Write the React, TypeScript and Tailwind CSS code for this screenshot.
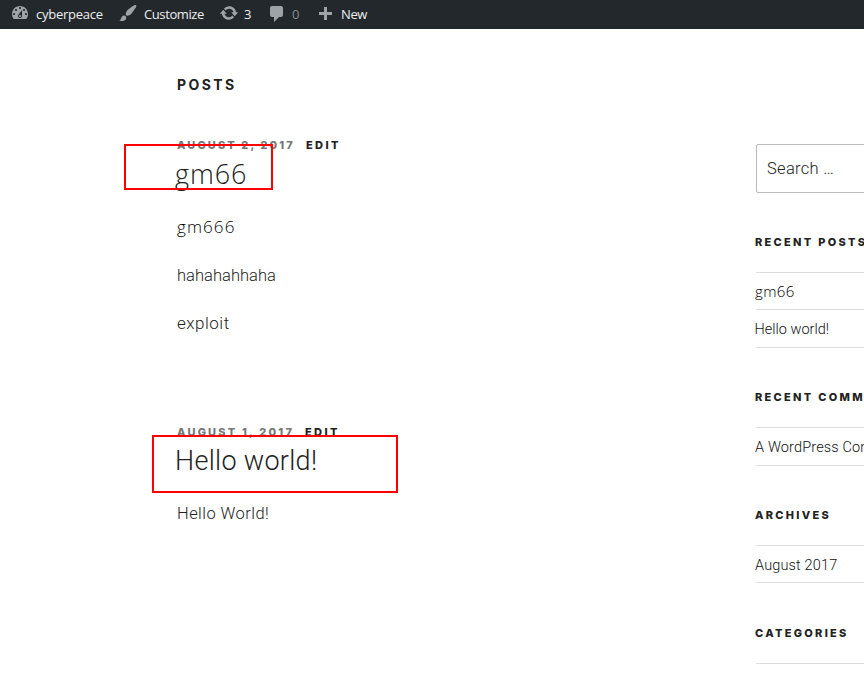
const franklin = "font-['Roboto','Open_Sans',sans-serif] font-light";
const humanist = "font-['Open_Sans','Noto_Sans',sans-serif] font-light";
const heading = "font-['Inter','Liberation_Sans',sans-serif] uppercase whitespace-nowrap";

function Icon({ d, className }: { d: string; className: string }) {
  return (
    <svg viewBox="0 0 20 20" className={`size-5 shrink-0 fill-[#9ea3a8] ${className}`} aria-hidden="true">
      <path d={d} />
    </svg>
  );
}

const icons = {
  dashboard:
    'M3.76 16h12.48c1.1-1.37 1.76-3.11 1.76-5 0-4.42-3.58-8-8-8s-8 3.58-8 8c0 1.89.66 3.63 1.76 5zM10 4c.55 0 1 .45 1 1s-.45 1-1 1-1-.45-1-1 .45-1 1-1zM6 6c.55 0 1 .45 1 1s-.45 1-1 1-1-.45-1-1 .45-1 1-1zm8 0c.55 0 1 .45 1 1s-.45 1-1 1-1-.45-1-1 .45-1 1-1zm-5.37 5.55L12 7v6c0 1.1-.9 2-2 2s-2-.9-2-2c0-.57.24-1.08.63-1.45zM4 10c.55 0 1 .45 1 1s-.45 1-1 1-1-.45-1-1 .45-1 1-1zm12 0c.55 0 1 .45 1 1s-.45 1-1 1-1-.45-1-1 .45-1 1-1zm-5 3c0-.55-.45-1-1-1s-1 .45-1 1 .45 1 1 1 1-.45 1-1z',
  brush:
    'M18.33 3.57s.27-.8-.31-1.36c-.53-.52-1.22-.24-1.22-.24-.61.3-5.76 3.47-7.67 5.57-.86.96-2.06 3.79-1.09 4.82.92.98 3.96-.17 4.79-1 2.06-2.06 5.21-7.17 5.5-7.79zM1.4 17.65c2.37-1.56 1.46-3.41 3.23-4.64.93-.65 2.22-.62 3.08.29.63.67.8 2.57-.16 3.46-1.57 1.45-4 1.55-6.15.89z',
  update:
    'M10.2 3.28c3.53 0 6.43 2.61 6.92 6h2.08l-3.5 4-3.5-4h2.32c-.45-1.97-2.21-3.45-4.32-3.45-1.45 0-2.73.71-3.54 1.78L4.95 5.66C6.23 4.2 8.11 3.28 10.2 3.28zm-.4 13.44c-3.52 0-6.43-2.61-6.92-6H.8l3.5-4c1.17 1.33 2.33 2.67 3.5 4H5.48c.45 1.97 2.21 3.45 4.32 3.45 1.45 0 2.73-.71 3.54-1.78l1.71 1.95c-1.28 1.46-3.15 2.38-5.25 2.38z',
  comment: 'M5 2h9c1.1 0 2 .9 2 2v7c0 1.1-.9 2-2 2h-2l-5 5v-5H5c-1.1 0-2-.9-2-2V4c0-1.1.9-2 2-2z',
  plus: 'M17 9v3h-5v5H9v-5H4V9h5V4h3v5h5z',
};

function AdminBar() {
  return (
    <header className="flex h-[29px] items-start bg-[#23282d] pl-2.5 font-['Open_Sans','Noto_Sans',sans-serif] text-[13px] leading-[28px] text-[#eee]">
      <a className="flex w-[108px]">
        <Icon d={icons.dashboard} className="mt-[3px] mr-[6px]" />
        <span className="tracking-[-0.25px]">cyberpeace</span>
      </a>
      <a className="flex w-[101px]">
        <Icon d={icons.brush} className="mt-[3px] mr-[6px]" />
        <span className="tracking-[-0.4px]">Customize</span>
      </a>
      <a className="flex w-12">
        <Icon d={icons.update} className="mt-[3px] mr-[5px]" />
        <span>3</span>
      </a>
      <a className="flex w-12">
        <Icon d={icons.comment} className="mt-1 mr-[5px]" />
        <span className="text-[#85898c]">0</span>
      </a>
      <a className="flex">
        <Icon d={icons.plus} className="mt-[3px] mr-[6px]" />
        <span className="tracking-[-0.4px]">New</span>
      </a>
    </header>
  );
}

function Meta({ date, gap }: { date: string; gap: string }) {
  return (
    <div className={`${heading} flex h-4 text-[11px] leading-4 font-extrabold`}>
      <span className={`${gap} text-[#767676]`}>{date}</span>
      <a className="tracking-[2.4px] text-[#222]">Edit</a>
    </div>
  );
}

function Posts() {
  return (
    <main className="w-[578px] shrink-0 pt-[46px] text-[#222]">
      <h2 className={`${heading} h-5 text-sm leading-5 font-bold tracking-[2.4px] text-[#222]`}>Posts</h2>
      <article className="relative mt-[42px]">
        <Meta date="August 2, 2017" gap="w-[129px] tracking-[2.1px]" />
        <h3 className={`${humanist} -ml-[2px] mt-[3px] h-9 text-[27px] leading-9 tracking-[0.9px]`}>gm66</h3>
        <div className={`${franklin} mt-6 flex flex-col gap-6 text-base leading-6`}>
          <p className={`${humanist} -mt-px h-[25px] text-[17px] tracking-[1.1px] text-black`}>gm666</p>
          <p className="text-[16.5px] tracking-[0.03px]">hahahahhaha</p>
          <p className="-mt-px h-[25px] text-[17px] tracking-[0.5px]">exploit</p>
        </div>
        <div className="absolute -left-[53px] top-[7px] h-[46px] w-[149px] border-2 border-[#f00]" />
      </article>
      <article className="relative mt-[88px]">
        <Meta date="August 1, 2017" gap="w-[128px] tracking-[2.2px]" />
        <h3 className={`${franklin} -ml-[2px] mt-[3px] h-9 text-[27px] leading-9 tracking-[0.3px]`}>Hello world!</h3>
        <p className={`${franklin} mt-[23px] text-[16.5px] leading-6 tracking-[0.45px]`}>Hello World!</p>
        <div className="absolute -left-[25px] top-[11px] h-[58px] w-[246px] border-2 border-[#f00]" />
      </article>
    </main>
  );
}

const row = 'flex items-center border-b border-[#ddd] whitespace-nowrap';
const widgetTitle = `${heading} h-4 text-[11px] leading-4 font-extrabold tracking-[2.3px] text-[#222]`;

function Sidebar() {
  return (
    <aside className={`${franklin} w-[340px] shrink-0 pt-[115px] text-[14.5px] text-[#111]`}>
      <div className="ml-px flex h-[49px] items-center rounded-xs border border-[#bbb] pt-0.5 pl-2.5 text-[16.5px] tracking-[0.3px] text-[#222]">
        Search …
      </div>
      <h2 className={`${widgetTitle} mt-[41px]`}>Recent Posts</h2>
      <ul className="ml-px mt-[22px] border-t border-[#ddd]">
        <li className={`${row} ${humanist} h-[37px] text-[15px] tracking-[0.4px] text-black`}><span className="-ml-px">gm66</span></li>
        <li className={`${row} h-[38px] pt-0.5`}><span className="-ml-[1.5px]">Hello world!</span></li>
      </ul>
      <h2 className={`${widgetTitle} mt-[41px]`}>Recent Comments</h2>
      <ul className="ml-px mt-[22px] border-t border-[#ddd]">
        <li className={`${row} h-[38px] pt-0.5 tracking-[0.15px]`}><span className="-ml-px">A WordPress Commenter</span></li>
      </ul>
      <h2 className={`${widgetTitle} mt-[41px]`}>Archives</h2>
      <ul className="ml-px mt-[22px] border-t border-[#ddd]">
        <li className={`${row} h-[37px] pt-[3px] tracking-[0.15px]`}><span className="-ml-px">August 2017</span></li>
      </ul>
      <h2 className={`${widgetTitle} mt-[42px]`}>Categories</h2>
      <div className="ml-px mt-[22px] border-t border-[#ddd]" />
    </aside>
  );
}

export default function App() {
  return (
    <div className="h-[673px] w-[864px] overflow-hidden bg-white">
      <AdminBar />
      <div className="flex pl-[177px]">
        <Posts />
        <Sidebar />
      </div>
    </div>
  );
}
